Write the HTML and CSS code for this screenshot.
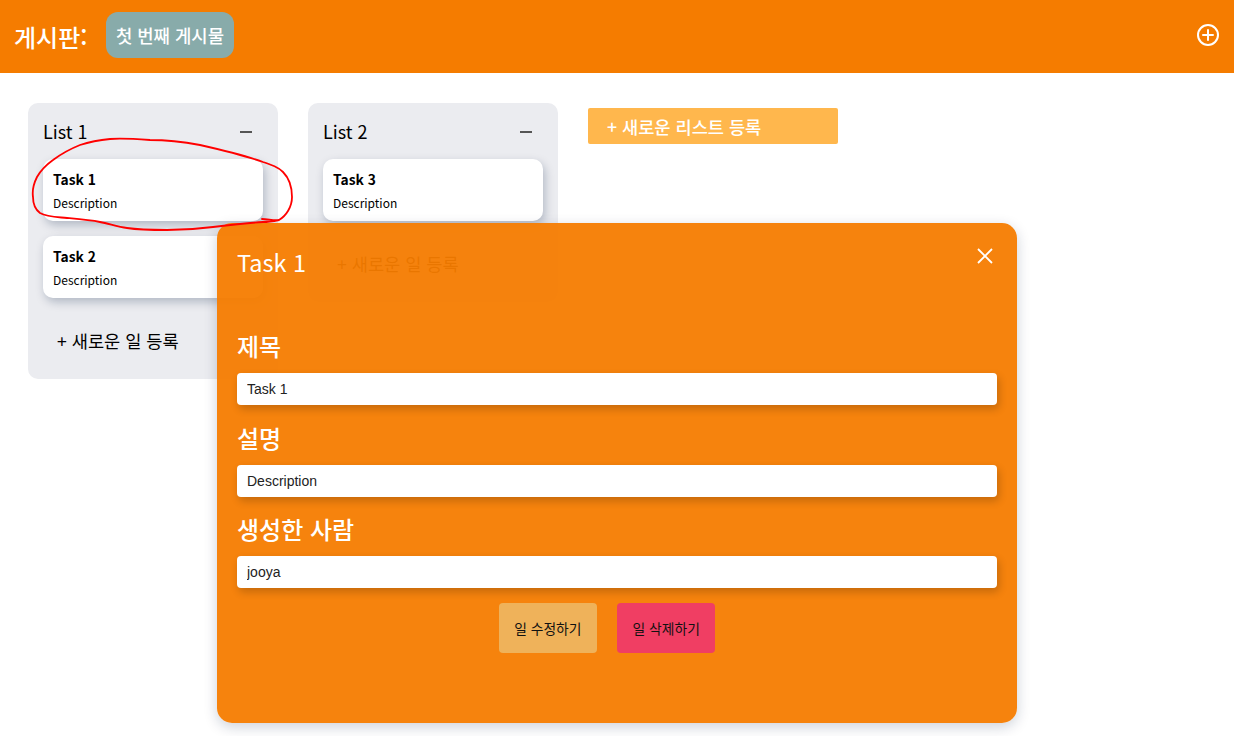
FILE: index.html
```html
<!DOCTYPE html>
<html lang="ko">
<head>
    <meta charset="UTF-8">
    <meta name="viewport" content="width=device-width, initial-scale=1.0">
    <title>게시판</title>
    <link rel="stylesheet" href="styles.css">
</head>
<body>
    <header class="top-bar">
        <div class="board-title">게시판:</div>
        <div class="board-tab">첫 번째 게시물</div>
        <button class="board-add" aria-label="add">
            <svg width="24" height="24" viewBox="0 0 24 24" fill="none" stroke="#fff" stroke-width="2" stroke-linecap="round">
                <circle cx="12" cy="12" r="10"/>
                <path d="M12 7v10M7 12h10"/>
            </svg>
        </button>
    </header>

    <main class="board">
        <section class="list">
            <div class="list-head">
                <span class="list-name">List 1</span>
                <button class="list-toggle" aria-label="collapse"><span class="minus"></span></button>
            </div>
            <div class="task">
                <div class="task-title">Task 1</div>
                <div class="task-desc">Description</div>
            </div>
            <div class="task">
                <div class="task-title">Task 2</div>
                <div class="task-desc">Description</div>
            </div>
            <div class="task-add">+ 새로운 일 등록</div>
        </section>

        <section class="list">
            <div class="list-head">
                <span class="list-name">List 2</span>
                <button class="list-toggle" aria-label="collapse"><span class="minus"></span></button>
            </div>
            <div class="task">
                <div class="task-title">Task 3</div>
                <div class="task-desc">Description</div>
            </div>
            <div class="task-add">+ 새로운 일 등록</div>
        </section>

        <button class="list-add">+ 새로운 리스트 등록</button>
    </main>

    <div class="modal">
        <div class="modal-head">
            <h2 class="modal-title">Task 1</h2>
            <button class="modal-close" aria-label="close">
                <svg width="16" height="16" viewBox="0 0 16 16" fill="none" stroke="#fff" stroke-width="1.8">
                    <path d="M1 1l14 14M15 1L1 15"/>
                </svg>
            </button>
        </div>
        <form class="modal-form">
            <label class="field-label" for="title">제목</label>
            <input class="field-input" type="text" id="title" value="Task 1">
            <label class="field-label" for="desc">설명</label>
            <input class="field-input" type="text" id="desc" value="Description">
            <label class="field-label" for="author">생성한 사람</label>
            <input class="field-input" type="text" id="author" value="jooya">
            <div class="modal-actions">
                <button type="button" class="btn btn-edit">일 수정하기</button>
                <button type="button" class="btn btn-delete">일 삭제하기</button>
            </div>
        </form>
    </div>

    <!-- red pen mark around the first task, drawn over everything -->
    <svg class="scribble" width="300" height="240" viewBox="0 0 300 240" fill="none" stroke="#f00" stroke-width="1.8" stroke-linecap="round" stroke-linejoin="round">
        <path d="M262 219 C268 219 274 221 279 220 C286 216 292 207 292 197 C292 186 289 178 283 172 C278 167 272 165 263 162 C244 155 222 150 200 145 C184 142 168 140 150 140 C136 139 122 138 110 139 C99 140 89 142 80 145 C70 149 61 154 53 160 C46 165 41 170 37 177 C34 183 32 190 33 197 C33 204 36 210 40 213 C47 217 57 217 67 218 C78 219 90 220 100 222 C110 224 118 227 127 228 C140 230 153 230 167 230 C183 230 198 229 213 227 C230 225 247 223 263 222 C268 222 274 221 279 220"/>
    </svg>
</body>
</html>
```

FILE: styles.css
```css
body {
    margin: 0;
    font-family: "Noto Sans CJK KR", "Noto Sans", sans-serif;
    background-color: #fff;
    color: #000;
    height: 736px;
    overflow: hidden;
}

button {
    font-family: inherit;
    border: none;
    background: none;
    padding: 0;
}

.top-bar {
    height: 73px;
    background-color: #f57c00;
    display: flex;
    align-items: center;
    padding: 0 14px;
    box-sizing: border-box;
    color: #fff;
}

.board-title {
    font-size: 24px;
    font-weight: 500;
    margin-right: 19px;
    line-height: 1;
}

.board-tab {
    background-color: #88abaa;
    border-radius: 12px;
    height: 46px;
    margin-bottom: 4px;
    padding: 0 9.5px;
    display: flex;
    align-items: center;
    font-size: 17.8px;
    font-weight: 500;
}

.board-add {
    margin-left: auto;
    display: flex;
    margin-bottom: 3px;
}

.board {
    display: flex;
    align-items: flex-start;
    gap: 30px;
    padding: 30px 28px;
}

.list {
    width: 250px;
    background-color: #ebecf0;
    border-radius: 10px;
    padding: 15px;
    box-sizing: border-box;
}

.list-head {
    display: flex;
    justify-content: space-between;
    align-items: center;
    height: 28px;
    margin-bottom: 13px;
}

.list-name {
    font-size: 18px;
    line-height: 26px;
    margin-bottom: 2px;
}

.list-toggle {
    width: 34px;
    height: 28px;
    display: flex;
    align-items: center;
    justify-content: center;
}

.minus {
    display: block;
    width: 12px;
    height: 2px;
    background-color: #555;
    margin-bottom: 1px;
}

.task {
    width: 220px;
    height: 62px;
    background-color: #fff;
    border-radius: 10px;
    padding: 10px;
    box-sizing: border-box;
    margin-bottom: 15px;
    box-shadow: 2px 4px 10px rgba(9, 30, 66, 0.25);
}

.task-title {
    font-size: 13.8px;
    font-weight: 700;
    line-height: 20px;
}

.task-desc {
    font-size: 12px;
    line-height: 18px;
    margin-top: 5px;
}

.task-add {
    font-size: 17.6px;
    line-height: 26px;
    padding: 15px 14px 10px;
    height: 26px;
}

.list-add {
    width: 250px;
    height: 36px;
    margin-top: 5px;
    background-color: #ffb74d;
    color: #fff;
    font-size: 17.6px;
    font-weight: 500;
    text-align: left;
    padding-left: 19px;
    border-radius: 2px;
}

.scribble {
    position: absolute;
    left: 0;
    top: 0;
}

.modal {
    position: absolute;
    left: 217px;
    top: 223px;
    width: 800px;
    height: 500px;
    box-sizing: border-box;
    padding: 20px;
    background-color: rgba(245, 124, 0, 0.95);
    border-radius: 15px;
    box-shadow: 0 4px 14px rgba(9, 30, 66, 0.2);
    color: #fff;
}

.modal-head {
    display: flex;
    justify-content: space-between;
    align-items: flex-start;
    height: 70.5px;
}

.modal-title {
    margin: 0;
    font-size: 23.5px;
    font-weight: 400;
    line-height: 38px;
}

.modal-close {
    display: flex;
    margin: 5px 4px 0 0;
}

.modal-form {
    display: flex;
    flex-direction: column;
}

.field-label {
    font-size: 24px;
    font-weight: 500;
    line-height: 32px;
    height: 34px;
    margin-top: 16.5px;
    margin-bottom: 9px;
}

.field-input {
    height: 32px;
    box-sizing: border-box;
    border: none;
    border-radius: 4px;
    padding: 0 10px;
    font-family: "Liberation Sans", Arial, sans-serif;
    font-size: 14px;
    color: #222;
    background-color: #fff;
    box-shadow: 2px 4px 8px rgba(0, 0, 0, 0.2);
}

.modal-actions {
    display: flex;
    justify-content: center;
    margin-top: 15px;
}

.btn {
    height: 50px;
    padding: 0 15.5px;
    margin-right: 20px;
    border-radius: 4px;
    font-size: 13.8px;
    color: #111;
}

.btn-edit {
    background-color: #efb25a;
}

.btn-delete {
    background-color: #f03e63;
}
```
